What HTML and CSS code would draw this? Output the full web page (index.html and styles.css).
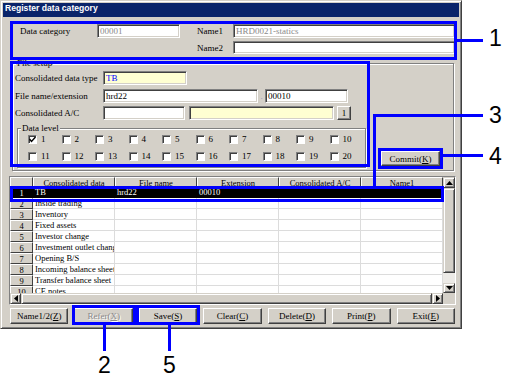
FILE: index.html
```html
<!DOCTYPE html>
<html lang="en">
<head>
    <meta charset="UTF-8">
    <title>Register data category</title>
    <link rel="stylesheet" href="styles.css">
</head>
<body>
<div class="stage">
    <div class="window">
        <div class="titlebar">Register data category</div>
        <div class="content">

            <div class="head-fields">
                <span class="label">Data category</span>
                <div class="field disabled">00001</div>
                <span class="label indent">Name1</span>
                <div class="field disabled">HRD0021-statics</div>
                <span></span>
                <span></span>
                <span class="label indent">Name2</span>
                <div class="field"></div>
            </div>

            <div class="group file-setup">
                <span class="legend">File setup</span>
                <div class="line">
                    <span class="label wide">Consolidated data type</span>
                    <div class="field yellow blue-text w-type">TB</div>
                </div>
                <div class="line line-b">
                    <span class="label wide">File name/extension</span>
                    <div class="field w-file">hrd22</div>
                    <span class="dot">.</span>
                    <div class="field w-ext">00010</div>
                </div>
                <div class="line line-c">
                    <span class="label wide">Consolidated A/C</span>
                    <div class="field w-ac"></div>
                    <div class="field yellow w-acname"></div>
                    <div class="btn mini">1</div>
                </div>
                <div class="level-row">
                    <div class="group data-level">
                        <span class="legend">Data level</span>
                        <div class="checks">
                            <label class="check"><span class="box"><svg width="7" height="7" viewBox="0 0 7 7"><polyline points="0.5,3 2.5,5.5 6.5,1" fill="none" stroke="#000" stroke-width="1.4"/></svg></span>1</label>
                            <label class="check"><span class="box"></span>2</label>
                            <label class="check"><span class="box"></span>3</label>
                            <label class="check"><span class="box"></span>4</label>
                            <label class="check"><span class="box"></span>5</label>
                            <label class="check"><span class="box"></span>6</label>
                            <label class="check"><span class="box"></span>7</label>
                            <label class="check"><span class="box"></span>8</label>
                            <label class="check"><span class="box"></span>9</label>
                            <label class="check"><span class="box"></span>10</label>
                            <label class="check"><span class="box"></span>11</label>
                            <label class="check"><span class="box"></span>12</label>
                            <label class="check"><span class="box"></span>13</label>
                            <label class="check"><span class="box"></span>14</label>
                            <label class="check"><span class="box"></span>15</label>
                            <label class="check"><span class="box"></span>16</label>
                            <label class="check"><span class="box"></span>17</label>
                            <label class="check"><span class="box"></span>18</label>
                            <label class="check"><span class="box"></span>19</label>
                            <label class="check"><span class="box"></span>20</label>
                        </div>
                    </div>
                    <div class="btn commit">Commit(<u>K</u>)</div>
                </div>
            </div>

            <div class="sheet">
                <div class="sheet-main">
                    <div class="cells">
                        <div class="row head">
                            <span class="rh"></span>
                            <span class="hc">Consolidated data</span>
                            <span class="hc">File name</span>
                            <span class="hc">Extension</span>
                            <span class="hc">Consolidated A/C</span>
                            <span class="hc">Name1</span>
                        </div>
                        <div class="row selected">
                            <span class="rh">1</span>
                            <span class="c">TB</span><span class="c">hrd22</span><span class="c">00010</span><span class="c"></span><span class="c"></span>
                        </div>
                        <div class="row">
                            <span class="rh">2</span>
                            <span class="c">Inside trading</span><span class="c"></span><span class="c"></span><span class="c"></span><span class="c"></span>
                        </div>
                        <div class="row">
                            <span class="rh">3</span>
                            <span class="c">Inventory</span><span class="c"></span><span class="c"></span><span class="c"></span><span class="c"></span>
                        </div>
                        <div class="row">
                            <span class="rh">4</span>
                            <span class="c">Fixed assets</span><span class="c"></span><span class="c"></span><span class="c"></span><span class="c"></span>
                        </div>
                        <div class="row">
                            <span class="rh">5</span>
                            <span class="c">Investor change</span><span class="c"></span><span class="c"></span><span class="c"></span><span class="c"></span>
                        </div>
                        <div class="row">
                            <span class="rh">6</span>
                            <span class="c">Investment outlet change</span><span class="c"></span><span class="c"></span><span class="c"></span><span class="c"></span>
                        </div>
                        <div class="row">
                            <span class="rh">7</span>
                            <span class="c">Opening B/S</span><span class="c"></span><span class="c"></span><span class="c"></span><span class="c"></span>
                        </div>
                        <div class="row">
                            <span class="rh">8</span>
                            <span class="c">Incoming balance sheet</span><span class="c"></span><span class="c"></span><span class="c"></span><span class="c"></span>
                        </div>
                        <div class="row">
                            <span class="rh">9</span>
                            <span class="c">Transfer balance sheet</span><span class="c"></span><span class="c"></span><span class="c"></span><span class="c"></span>
                        </div>
                        <div class="row">
                            <span class="rh">10</span>
                            <span class="c">CE notes</span><span class="c"></span><span class="c"></span><span class="c"></span><span class="c"></span>
                        </div>
                    </div>
                    <div class="vscroll">
                        <div class="arrow up"><svg width="7" height="4" viewBox="0 0 7 4"><polygon points="3.5,0 7,4 0,4" fill="#000"/></svg></div>
                        <div class="thumb"></div>
                        <div class="track"></div>
                        <div class="arrow down"><svg width="7" height="4" viewBox="0 0 7 4"><polygon points="0,0 7,0 3.5,4" fill="#000"/></svg></div>
                    </div>
                </div>
                <div class="sheet-foot">
                    <div class="hscroll">
                        <div class="arrow left"><svg width="4" height="7" viewBox="0 0 4 7"><polygon points="0,3.5 4,0 4,7" fill="#000"/></svg></div>
                        <div class="thumb"></div>
                        <div class="arrow right"><svg width="4" height="7" viewBox="0 0 4 7"><polygon points="0,0 4,3.5 0,7" fill="#000"/></svg></div>
                    </div>
                    <div class="corner"></div>
                </div>
            </div>

            <div class="buttons">
                <div class="btn">Name1/2(<u>Z</u>)</div>
                <div class="btn off">Refer(<u>X</u>)</div>
                <div class="btn">Save(<u>S</u>)</div>
                <div class="btn">Clear(<u>C</u>)</div>
                <div class="btn">Delete(<u>D</u>)</div>
                <div class="btn">Print(<u>P</u>)</div>
                <div class="btn">Exit(<u>E</u>)</div>
            </div>
        </div>
    </div>

    <!-- callouts -->
    <div class="mark m1"></div>
    <div class="wire w1"></div>
    <div class="num n1">1</div>

    <div class="mark m3"></div>
    <div class="wire w3h"></div>
    <div class="wire w3v"></div>
    <div class="num n3">3</div>

    <div class="mark mrow"></div>

    <div class="mark m4"></div>
    <div class="wire w4"></div>
    <div class="num n4">4</div>

    <div class="mark m2"></div>
    <div class="mark m5"></div>
    <div class="wire w2"></div>
    <div class="wire w5"></div>
    <div class="num n2">2</div>
    <div class="num n5">5</div>
</div>
</body>
</html>
```

FILE: styles.css
```css
* {
    box-sizing: border-box;
}

body {
    margin: 0;
    background: #fff;
    font-family: "Liberation Serif", "Times New Roman", serif;
    font-size: 9px;
    color: #000;
}

.stage {
    position: relative;
    width: 515px;
    height: 382px;
}

/* window frame */
.window {
    width: 462px;
    height: 329px;
    background: #d4d0c8;
    border: 1px solid;
    border-color: #d4d0c8 #404040 #404040 #d4d0c8;
    box-shadow: inset 1px 1px #fff, inset -1px -1px #808080;
    padding: 2px;
    display: flex;
    flex-direction: column;
}

.titlebar {
    height: 14px;
    line-height: 14px;
    padding-left: 2px;
    background: #0a246a;
    color: #fff;
    font: bold 8.6px "Liberation Sans", Arial, sans-serif;
}

.content {
    display: flex;
    flex-direction: column;
}

.label {
    display: flex;
    align-items: center;
    white-space: nowrap;
}

.label.indent {
    padding-left: 17px;
}

.label.wide {
    width: 88px;
}

/* sunken text boxes */
.field {
    height: 14px;
    background: #fff;
    border: 1px solid;
    border-color: #808080 #fff #fff #808080;
    box-shadow: inset 1px 1px #404040, inset -1px -1px #d4d0c8;
    padding: 0 2px;
    line-height: 12px;
    white-space: nowrap;
    overflow: hidden;
}

.field.disabled {
    color: #8a8a8a;
}

.field.yellow {
    background: #ffffd2;
}

.field.blue-text {
    color: #0000ff;
}

.head-fields {
    display: grid;
    grid-template-columns: 77px 83px 53px 222px;
    grid-template-rows: 14px 13px;
    row-gap: 3px;
    margin: 7px 0 0 17px;
}

.head-fields .field {
    height: auto;
}

/* group boxes */
.group {
    position: relative;
    border: 1px solid #808080;
    box-shadow: inset 1px 1px #fff, 1px 1px #fff;
}

.legend {
    position: absolute;
    top: -6px;
    left: 3px;
    padding: 0 1px;
    background: #d4d0c8;
    line-height: 10px;
}

.file-setup {
    display: flex;
    flex-direction: column;
    width: 442px;
    height: 108px;
    margin: 9px 0 0 9px;
    padding: 7px 0 0 2px;
}

.line {
    display: flex;
    align-items: center;
    height: 14px;
}

.line-b {
    margin-top: 4px;
}

.line-c {
    margin-top: 3px;
}

.w-type { width: 84px; }
.w-file { width: 155px; }
.w-ext { width: 83px; }
.w-ac { width: 82px; }

.w-acname {
    width: 145px;
    margin-left: 4px;
}

.dot {
    width: 7px;
    text-align: center;
    color: #9090c0;
}

.level-row {
    display: flex;
    align-items: flex-end;
    margin-top: 8px;
}

.data-level {
    width: 349px;
    height: 40px;
    margin-left: 2px;
    padding: 3px 0 0 10px;
}

.checks {
    display: grid;
    grid-template-columns: repeat(10, 33.5px);
    grid-auto-rows: 14px;
    row-gap: 3px;
}

.check {
    display: flex;
    align-items: center;
    gap: 4px;
}

.box {
    width: 9px;
    height: 9px;
    background: #fff;
    border: 1px solid;
    border-color: #808080 #fff #fff #808080;
    box-shadow: inset 1px 1px #404040;
    display: flex;
    align-items: center;
    justify-content: center;
}

/* raised buttons */
.btn {
    display: flex;
    align-items: center;
    justify-content: center;
    background: #d4d0c8;
    border: 1px solid;
    border-color: #fff #404040 #404040 #fff;
    box-shadow: inset -1px -1px #808080;
    white-space: nowrap;
}

.btn.mini {
    width: 14px;
    height: 14px;
    margin-left: 3px;
}

.btn.commit {
    width: 59px;
    height: 15px;
    margin: 0 0 2px 15px;
}

.btn.off {
    color: #8a8a8a;
    text-shadow: 1px 1px #fff;
}

/* data sheet */
.sheet {
    width: 447px;
    margin: 5px 0 0 6px;
    border: 1px solid;
    border-color: #808080 #fff #fff #808080;
}

.sheet-main {
    display: flex;
    height: 116px;
}

.cells {
    width: 433px;
    overflow: hidden;
    background: #fff;
    font-size: 8.5px;
}

.row {
    display: grid;
    grid-template-columns: 23px repeat(5, 82px);
    height: 11px;
    line-height: 10px;
}

.row.head {
    height: 10px;
    line-height: 10px;
}

.rh, .hc {
    background: #d4d0c8;
    border: 1px solid;
    border-color: #fff #404040 #404040 #fff;
    text-align: center;
    white-space: nowrap;
    overflow: hidden;
}

.c {
    border-right: 1px solid #dcdcdc;
    border-bottom: 1px solid #dcdcdc;
    padding-left: 2px;
    white-space: nowrap;
    overflow: hidden;
}

.row.selected .rh,
.row.selected .c {
    background: #000;
    color: #fff;
    border-color: #000;
}

.vscroll {
    width: 12px;
    display: flex;
    flex-direction: column;
}

.arrow {
    display: flex;
    align-items: center;
    justify-content: center;
    background: #d4d0c8;
    border: 1px solid;
    border-color: #d4d0c8 #404040 #404040 #d4d0c8;
    box-shadow: inset 1px 1px #fff, inset -1px -1px #808080;
}

.arrow.up { height: 11px; }
.arrow.down { height: 10px; }
.arrow.left, .arrow.right { width: 11px; }

.thumb {
    flex: 1;
    background: #d4d0c8;
    border: 1px solid;
    border-color: #d4d0c8 #404040 #404040 #d4d0c8;
    box-shadow: inset 1px 1px #fff, inset -1px -1px #808080;
}

.track {
    height: 10px;
    background: #eceae6;
}

.sheet-foot {
    display: flex;
    height: 11px;
}

.hscroll {
    width: 433px;
    display: flex;
}

.corner {
    width: 12px;
    background: #d4d0c8;
}

.buttons {
    display: flex;
    gap: 6px;
    width: 445px;
    height: 16px;
    margin: 3px 0 0 7px;
}

.buttons .btn {
    flex: 1;
}

/* callouts over the screenshot */
.mark {
    position: absolute;
    border: 3px solid #0000ff;
}

.wire {
    position: absolute;
    background: #0000ff;
}

.num {
    position: absolute;
    font: 23px/23px "Liberation Sans", Arial, sans-serif;
    color: #000;
}

.m1 { left: 10px; top: 21px; width: 447px; height: 39px; }
.w1 { left: 457px; top: 39px; width: 26px; height: 3px; }
.n1 { left: 489px; top: 27px; }

.m3 { left: 10px; top: 61px; width: 360px; height: 106px; }
.w3h { left: 373px; top: 114px; width: 110px; height: 3px; }
.w3v { left: 373px; top: 114px; width: 3px; height: 73px; }
.n3 { left: 489px; top: 104px; }

.mrow { left: 10px; top: 186px; width: 434px; height: 16px; }

.m4 { left: 378px; top: 148px; width: 65px; height: 21px; }
.w4 { left: 443px; top: 154px; width: 40px; height: 3px; }
.n4 { left: 489px; top: 145px; }

.m2 { left: 72px; top: 305px; width: 64px; height: 20px; }
.m5 { left: 136px; top: 305px; width: 64px; height: 20px; }
.w2 { left: 103px; top: 325px; width: 3px; height: 26px; }
.w5 { left: 168px; top: 325px; width: 3px; height: 26px; }
.n2 { left: 98px; top: 354px; }
.n5 { left: 163px; top: 354px; }
```
